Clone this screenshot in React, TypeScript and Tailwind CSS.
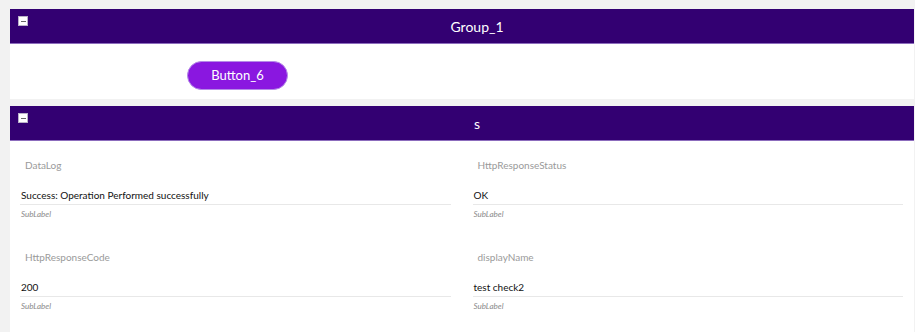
import React from "react";

function Collapse() {
  return (
    <div className="w-[10px] h-[10px] bg-white border border-[#b9b2c8] flex items-center justify-center">
      <div className="w-[5px] h-[1px] bg-[#666]" />
    </div>
  );
}

function Header({ title }: { title: string }) {
  return (
    <div className="relative h-[35px] bg-[#330072] border-b border-[#8c6cbd] flex items-center justify-center pl-[30px]">
      <div className="absolute left-[8px] top-[7px]">
        <Collapse />
      </div>
      <span className="text-white text-[14px]">{title}</span>
    </div>
  );
}

function Field({ label, value }: { label: string; value: string }) {
  return (
    <div className="flex flex-col">
      <div className="h-[30px] flex items-center pl-[5px] text-[10px] text-[#9a9a9a]">{label}</div>
      <div className="h-[25px] pt-[8px] pl-[1px] text-[10px] leading-[14px] text-[#111] border-b border-[#e8e8e8]">{value}</div>
      <div className="h-[18px] flex items-center pl-[1px] text-[8px] italic text-[#8a8a8a]">SubLabel</div>
    </div>
  );
}

export default function App() {
  return (
    <div
      className="w-[915px] h-[332px] bg-[#f2f2f2] pl-[10px] pr-[1px] pt-[9px] overflow-hidden"
      style={{ fontFamily: "Lato, 'Noto Sans', sans-serif" }}
    >
      <div className="bg-white">
        <Header title="Group_1" />
        <div className="pt-[17px] pb-[9px] pl-[177px]">
          <button className="w-[101px] h-[29px] rounded-full bg-[#8a17e0] text-white text-[13px] border border-[#b58be8]">
            Button_6
          </button>
        </div>
      </div>
      <div className="h-[7px]" />
      <div className="bg-white h-[300px]">
        <Header title="s" />
        <div className="grid grid-cols-2 gap-x-[22px] gap-y-[19px] pl-[10px] pr-[11px] pt-[9px]">
          <Field label="DataLog" value="Success: Operation Performed successfully" />
          <Field label="HttpResponseStatus" value="OK" />
          <Field label="HttpResponseCode" value="200" />
          <Field label="displayName" value="test check2" />
        </div>
      </div>
    </div>
  );
}
